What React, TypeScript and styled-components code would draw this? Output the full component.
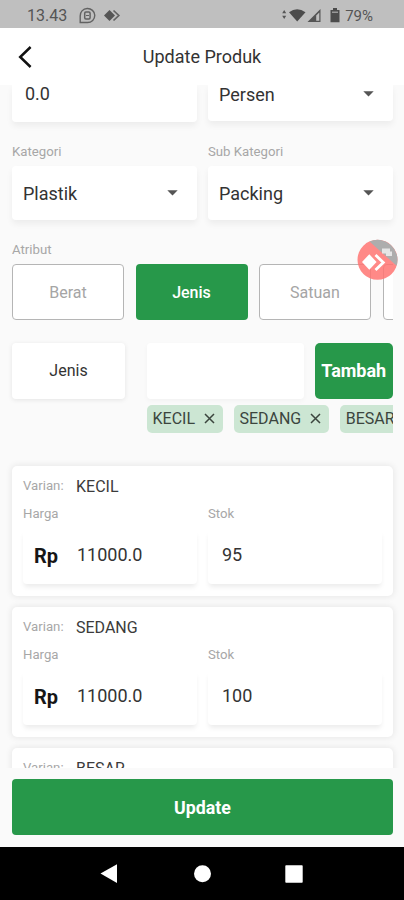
import React from "react";
import styled, { createGlobalStyle, css } from "styled-components";

const GREEN = "#27984a";

const Global = createGlobalStyle`
  * { box-sizing: border-box; }
  body { margin: 0; background: #fafafa; font-family: Roboto, sans-serif; color: #333; }
  button { font-family: inherit; border: 0; padding: 0; margin: 0; }
`;

const Screen = styled.div`
  width: 404px;
  height: 900px;
  display: flex;
  flex-direction: column;
  overflow: hidden;
  background: #fafafa;
`;

const StatusBar = styled.header`
  flex: 0 0 28px;
  background: #bfbfbf;
  display: flex;
  align-items: center;
  padding: 4px 31px 0 27px;
  color: #555;
  font-size: 16px;
  line-height: 24px;
`;

const Clock = styled.span`
  width: 52px;
`;

const StatusIcons = styled.svg`
  display: block;
  flex: none;
`;

const Battery = styled.span`
  margin-left: 1px;
  font-size: 15px;
`;

const Spacer = styled.div`
  flex: 1;
`;

const TitleBar = styled.div`
  flex: 0 0 57px;
  background: #fff;
  display: grid;
  grid-template-columns: 50px 1fr 50px;
  align-items: center;
`;

const BackButton = styled.button`
  background: none;
  padding-left: 18px;
  display: flex;
`;

const Title = styled.h1`
  margin: 0;
  text-align: center;
  font-size: 18px;
  font-weight: 400;
  color: #333;
`;

const Content = styled.main`
  flex: 0 0 683px;
  overflow: hidden;
  padding: 0 11px 0 12px;
  display: flex;
  flex-direction: column;
`;

const Columns = styled.div`
  display: grid;
  grid-template-columns: 185px 185px;
  column-gap: 11px;
  flex: none;
`;

const Label = styled.div`
  font-size: 13.2px;
  line-height: 16px;
  color: #a7a7a7;
`;

const Field = styled.div<{ $cut?: number }>`
  height: ${(p) => p.$cut ?? 54}px;
  background: #fff;
  border-radius: ${(p) => (p.$cut ? "0 0 4px 4px" : "4px")};
  box-shadow: 0 4px 6px rgba(0, 0, 0, 0.055);
  display: flex;
  align-items: center;
  justify-content: space-between;
  padding: 0 19px 0 11px;
  font-size: 18px;
  color: #333;
`;

const PartialValue = styled(Field)`
  padding: 0 0 21px 13px;
`;

const PartialSelect = styled(Field)`
  padding-bottom: 18px;
`;

const CategoryRow = styled(Columns)`
  margin-top: 22px;
  ${Label} { margin-bottom: 6px; }
`;

const AttributeLabel = styled(Label)`
  margin: 22px 0 6px;
`;

const Tabs = styled.div`
  display: flex;
  gap: 11.5px;
  overflow: hidden;
  flex: none;
`;

const Tab = styled.button<{ $active?: boolean }>`
  flex: 0 0 112px;
  height: 56px;
  border-radius: 4px;
  font-size: 16px;
  ${(p) =>
    p.$active
      ? css`
          background: ${GREEN};
          color: #fff;
          font-weight: 500;
        `
      : css`
          background: #fff;
          color: #a5a5a5;
          border: 1px solid #b5b5b5;
        `}
`;

const OptionRow = styled.div`
  margin-top: 22.5px;
  display: flex;
  align-items: flex-start;
  justify-content: space-between;
  flex: none;
`;

const OptionName = styled.div`
  width: 113px;
  height: 56px;
  display: flex;
  align-items: center;
  justify-content: center;
  background: #fff;
  border-radius: 4px;
  box-shadow: 0 1px 5px rgba(0, 0, 0, 0.09);
  font-size: 16px;
`;

const OptionEditor = styled.div`
  width: 246.5px;
`;

const EntryRow = styled.div`
  display: flex;
  justify-content: space-between;
`;

const Entry = styled.div`
  width: 157px;
  height: 56px;
  background: #fff;
  border-radius: 4px;
  box-shadow: 0 2px 5px rgba(0, 0, 0, 0.035);
`;

const AddButton = styled.button`
  width: 78.5px;
  height: 56px;
  border-radius: 5px;
  background: ${GREEN};
  color: #fff;
  font-size: 18px;
  font-weight: 700;
`;

const Chips = styled.div`
  margin-top: 6px;
  display: flex;
  gap: 11px;
  overflow: hidden;
`;

const Chip = styled.div`
  flex: none;
  height: 28px;
  padding: 0 8px 0 6px;
  border-radius: 5px;
  background: #cce6d3;
  display: flex;
  align-items: center;
  gap: 8.5px;
  font-size: 16px;
  color: #3b453e;
`;

const Variants = styled.div`
  margin-top: 33px;
  display: flex;
  flex-direction: column;
  gap: 11px;
`;

const VariantCard = styled.section`
  flex: none;
  height: 130px;
  padding: 12px 11px 0;
  background: #fff;
  border-radius: 5px;
  box-shadow: 0 0 6px 1px rgba(0, 0, 0, 0.075);
`;

const VariantHead = styled.div`
  display: flex;
  align-items: center;
  height: 18px;
`;

const VariantLabel = styled(Label)`
  width: 53px;
  margin-top: -2px;
`;

const VariantName = styled.span`
  font-size: 16px;
  line-height: 18px;
  color: #3b3b3b;
`;

const VariantFields = styled.div`
  margin-top: 10px;
  display: grid;
  grid-template-columns: 174px 174px;
  column-gap: 11px;
`;

const VariantField = styled(Field)`
  margin-top: 8px;
  padding: 0 0 4px 14px;
  justify-content: flex-start;
  box-shadow: 0 4px 5px -1px rgba(0, 0, 0, 0.08);
`;

const PriceField = styled(VariantField)`
  padding-left: 11px;
`;

const Currency = styled.b`
  width: 43px;
  padding-top: 3px;
  font-size: 20px;
  font-weight: 700;
  color: #161616;
`;

const Footer = styled.footer`
  flex: 0 0 79px;
  padding: 11px 11px 12px 12px;
  background: #fafafa;
`;

const UpdateButton = styled.button`
  width: 100%;
  height: 56px;
  border-radius: 4px;
  background: ${GREEN};
  color: #fff;
  font-size: 17.8px;
  font-weight: 700;
`;

const NavBar = styled.nav`
  flex: 1;
  background: #000;
  display: flex;
  justify-content: center;
`;

const Assist = styled.svg`
  position: absolute;
  left: 357px;
  top: 239px;
`;

const Caret = () => (
  <svg width="11" height="6" viewBox="0 0 11 6">
    <path d="M0.3 0.3H10.7L5.5 5.6Z" fill="#555" />
  </svg>
);

const Cross = () => (
  <svg width="11" height="11" viewBox="0 0 11 11">
    <path d="M1 1L10 10M10 1L1 10" stroke="#3b453e" strokeWidth="1.5" />
  </svg>
);

function Variant({ name, stock }: { name: string; stock: string }) {
  return (
    <VariantCard>
      <VariantHead>
        <VariantLabel>Varian:</VariantLabel>
        <VariantName>{name}</VariantName>
      </VariantHead>
      <VariantFields>
        <div>
          <Label>Harga</Label>
          <PriceField>
            <Currency>Rp</Currency>
            <span>11000.0</span>
          </PriceField>
        </div>
        <div>
          <Label>Stok</Label>
          <VariantField>{stock}</VariantField>
        </div>
      </VariantFields>
    </VariantCard>
  );
}

export default function App() {
  return (
    <Screen>
      <Global />
      <StatusBar>
        <Clock>13.43</Clock>
        <StatusIcons width="42" height="18" viewBox="0 0 42 18">
          <path d="M1.2 15.5V9A7.3 7 0 1 1 8.5 15.5Z" fill="none" stroke="#626262" strokeWidth="1.4" />
          <rect x="5.7" y="5" width="5.4" height="7" rx="1.2" fill="none" stroke="#626262" strokeWidth="1.5" />
          <path d="M7 8.5H10" stroke="#626262" />
          <path d="M25 8.5L30.5 3L36 8.5L30.5 14Z" fill="#555" />
          <path d="M34.5 3.5L39.8 8.5L34.5 13.5" fill="none" stroke="#626262" strokeWidth="1.7" />
        </StatusIcons>
        <Spacer />
        <StatusIcons width="63" height="18" viewBox="0 0 63 18">
          <path d="M1.2 6.2L3.2 3L5.2 6.2ZM1.2 8.8L3.2 12L5.2 8.8Z" fill="#555" />
          <path d="M8 5.2Q16 -0.8 24.5 5.2L16.2 14.6Z" fill="#4c4c4c" />
          <path d="M26.5 15L39.5 2V15Z" fill="#555" />
          <path d="M35.2 8.5L38.3 5.4V13.8H35.2Z" fill="#bfbfbf" />
          <path d="M49.5 3H52V1H56V3H58.5V15.2H49.5Z" fill="#4c4c4c" />
          <path d="M51 4.5H57V6H51Z" fill="#999" />
        </StatusIcons>
        <Battery>79%</Battery>
      </StatusBar>

      <TitleBar>
        <BackButton aria-label="Kembali">
          <svg width="14" height="22" viewBox="0 0 14 22">
            <path d="M12.6 1L2.2 11L12.6 21" fill="none" stroke="#111" strokeWidth="2.5" />
          </svg>
        </BackButton>
        <Title>Update Produk</Title>
      </TitleBar>

      <Content>
        <Columns>
          <PartialValue $cut={37}>0.0</PartialValue>
          <PartialSelect $cut={36}>
            Persen
            <Caret />
          </PartialSelect>
        </Columns>

        <CategoryRow>
          <div>
            <Label>Kategori</Label>
            <Field>
              Plastik
              <Caret />
            </Field>
          </div>
          <div>
            <Label>Sub Kategori</Label>
            <Field>
              Packing
              <Caret />
            </Field>
          </div>
        </CategoryRow>

        <AttributeLabel>Atribut</AttributeLabel>
        <Tabs>
          <Tab>Berat</Tab>
          <Tab $active>Jenis</Tab>
          <Tab>Satuan</Tab>
          <Tab />
        </Tabs>

        <OptionRow>
          <OptionName>Jenis</OptionName>
          <OptionEditor>
            <EntryRow>
              <Entry />
              <AddButton>Tambah</AddButton>
            </EntryRow>
            <Chips>
              {["KECIL", "SEDANG", "BESAR"].map((name) => (
                <Chip key={name}>
                  {name}
                  <Cross />
                </Chip>
              ))}
            </Chips>
          </OptionEditor>
        </OptionRow>

        <Variants>
          <Variant name="KECIL" stock="95" />
          <Variant name="SEDANG" stock="100" />
          <Variant name="BESAR" stock="100" />
        </Variants>
      </Content>

      <Footer>
        <UpdateButton>Update</UpdateButton>
      </Footer>

      <NavBar>
        <svg width="404" height="53" viewBox="0 0 404 53">
          <path d="M100.5 26.5L117 17.2V36Z" fill="#fff" />
          <circle cx="202.5" cy="26.7" r="8.5" fill="#fff" />
          <rect x="285.3" y="18.3" width="17.4" height="17.4" rx="0.8" fill="#fff" />
        </svg>
      </NavBar>

      <Assist width="42" height="42" viewBox="0 0 42 42">
        <circle cx="20.5" cy="20.8" r="20" fill="#ff7472" fillOpacity="0.85" />
        <path d="M12.5 2.5A20 20 0 0 1 39.6 26.8Z" fill="#adadad" />
        <path d="M5 23L12.3 15.3L19.6 23L12.3 30.7Z" fill="#fff" />
        <path d="M18.5 16L26.3 23.5L18.5 31" fill="none" stroke="#fff" strokeWidth="2.8" />
        <path d="M25 9.5H33V12.5H35V17H29V14.5H25Z" fill="#e5e5e5" />
      </Assist>
    </Screen>
  );
}
